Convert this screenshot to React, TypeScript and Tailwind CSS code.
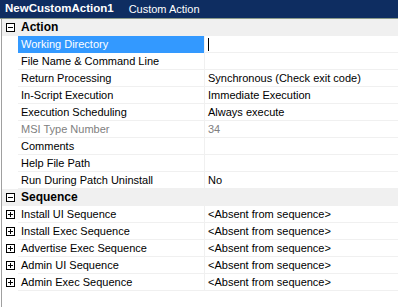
import React from 'react';

type Prop = { label: string; value?: string; muted?: boolean; selected?: boolean };

const actionProps: Prop[] = [
  { label: 'Working Directory', selected: true },
  { label: 'File Name & Command Line' },
  { label: 'Return Processing', value: 'Synchronous (Check exit code)' },
  { label: 'In-Script Execution', value: 'Immediate Execution' },
  { label: 'Execution Scheduling', value: 'Always execute' },
  { label: 'MSI Type Number', value: '34', muted: true },
  { label: 'Comments' },
  { label: 'Help File Path' },
  { label: 'Run During Patch Uninstall', value: 'No' },
];

const sequences = [
  'Install UI Sequence',
  'Install Exec Sequence',
  'Advertise Exec Sequence',
  'Admin UI Sequence',
  'Admin Exec Sequence',
];

function Toggle({ open }: { open: boolean }) {
  return (
    <svg width="9" height="9" viewBox="0 0 9 9" className="block">
      <rect x="0.5" y="0.5" width="8" height="8" fill="white" stroke="#000" />
      <line x1="2" y1="4.5" x2="7" y2="4.5" stroke="#000" />
      {!open && <line x1="4.5" y1="2" x2="4.5" y2="7" stroke="#000" />}
    </svg>
  );
}

function Category({ title }: { title: string }) {
  return (
    <div className="flex h-[17px] items-center bg-[#f0f0f0] border-b border-[#f0f0f0]">
      <div className="w-[16px] flex justify-center pl-[1px]">
        <Toggle open />
      </div>
      <div className="pl-[3px] font-bold text-black text-[12px]">{title}</div>
    </div>
  );
}

function Row({ gutter, label, value, muted, selected }: Prop & { gutter?: React.ReactNode }) {
  return (
    <div className="flex h-[17px]">
      <div className="w-[16px] flex items-center justify-center pl-[1px]">{gutter}</div>
      <div
        className={
          'w-[186px] flex items-center pl-[3px] border-b ' +
          (selected ? 'bg-[#3399ff] text-white border-[#3399ff]' : 'border-[#f0f0f0] ') +
          (muted ? 'text-[#808080]' : selected ? '' : 'text-black')
        }
      >
        {label}
      </div>
      <div className="flex-1 flex items-center pl-[3px] border-l border-b border-[#f0f0f0]">
        {selected ? (
          <div className="w-[1px] h-[13px] bg-black" />
        ) : (
          <span className={muted ? 'text-[#808080]' : 'text-black'}>{value}</span>
        )}
      </div>
    </div>
  );
}

export default function App() {
  return (
    <div
      className="w-[398px] h-[307px] bg-white overflow-hidden text-[11px] leading-none"
      style={{ fontFamily: '"Liberation Sans", Arial, sans-serif' }}
    >
      <div className="h-[18px] bg-[#0e2d61] flex items-center text-white border-b border-[#8a9a8a] box-content">
        <span className="pl-[5px] font-bold text-[11.5px]">NewCustomAction1</span>
        <span className="pl-[15px] text-[11px]">Custom Action</span>
      </div>
      <div className="border-l border-[#a0a0a0] ml-[1px] h-full">
        <Category title="Action" />
        {actionProps.map((p) => (
          <Row key={p.label} {...p} />
        ))}
        <Category title="Sequence" />
        {sequences.map((s) => (
          <Row key={s} label={s} value="<Absent from sequence>" gutter={<Toggle open={false} />} />
        ))}
      </div>
    </div>
  );
}
